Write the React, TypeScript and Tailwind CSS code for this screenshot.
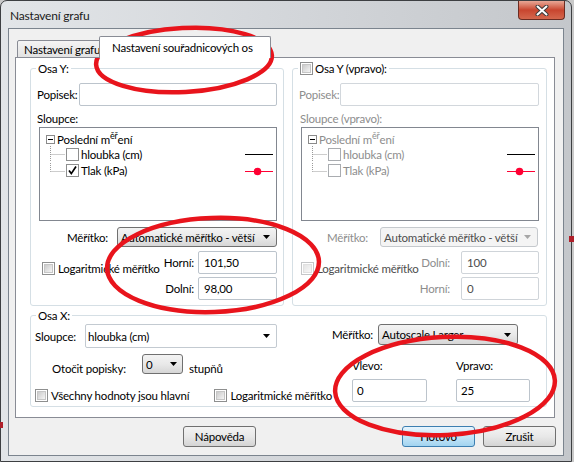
import React from "react";

function Arrow({ c = "#000" }: { c?: string }) {
  return (
    <svg width="7" height="4" viewBox="0 0 7 4" className="shrink-0">
      <path d="M0 0H7L3.5 4Z" fill={c} />
    </svg>
  );
}

function Check({ disabled }: { disabled?: boolean }) {
  return (
    <div
      className={
        disabled
          ? "w-[13px] h-[13px] shrink-0 border border-[#c4c6c8] bg-white p-[1px]"
          : "w-[13px] h-[13px] shrink-0 border border-[#8e8f8f] bg-white p-[1px]"
      }
    >
      <div
        className={
          disabled
            ? "w-full h-full border border-[#e0e0e0] bg-linear-to-br from-[#e4e4e4] to-[#f8f8f8]"
            : "w-full h-full border border-[#c6c6c6] bg-linear-to-br from-[#cbcbcb] to-[#f5f5f5]"
        }
      />
    </div>
  );
}

function TreeCheck({ checked, disabled }: { checked?: boolean; disabled?: boolean }) {
  return (
    <div
      className={
        disabled
          ? "w-[13px] h-[13px] shrink-0 border border-[#a9acb0] bg-white"
          : "w-[13px] h-[13px] shrink-0 border border-[#8e8f8f] bg-white"
      }
    >
      {checked && (
        <svg width="11" height="11" viewBox="0 0 11 11">
          <path d="M2 5.5L4.3 8.6L9 1.5" fill="none" stroke="#000" strokeWidth="1.7" />
        </svg>
      )}
    </div>
  );
}

function Connector({ last }: { last?: boolean }) {
  return (
    <svg width="20" height="16" viewBox="0 0 20 16" className="shrink-0">
      <path
        d={last ? "M4.5 0V8.5M4.5 8.5H19" : "M4.5 0V16M4.5 8.5H19"}
        fill="none"
        stroke="#9a9a9a"
        strokeWidth="1"
        strokeDasharray="1 1"
      />
    </svg>
  );
}

function Tree({ disabled }: { disabled?: boolean }) {
  const txt = disabled ? "text-[#8d8d8d]" : "text-black";
  return (
    <div className="w-[238px] h-[94px] border border-[#828790] bg-white pt-[4px] pl-[6px] pr-[3px]">
      <div className="flex items-center h-[14px]">
        <div className="w-[9px] h-[9px] shrink-0 border border-[#8a8a8a] bg-white flex items-center justify-center">
          <div className="w-[5px] h-[1px] bg-black" />
        </div>
        <span className={`ml-[2px] ${txt}`}>
          Poslední m<span className="text-[9px] leading-none align-super">ěř</span>ení
        </span>
      </div>
      <div className="flex items-center h-[16px]">
        <Connector />
        <TreeCheck disabled={disabled} />
        <span className={`ml-[2px] ${txt}`}>hloubka (cm)</span>
        <svg width="28" height="16" viewBox="0 0 28 16" className="ml-auto shrink-0">
          <path d="M0 8.5H28" stroke="#000" strokeWidth="1" />
        </svg>
      </div>
      <div className="flex items-center h-[17px]">
        <Connector last />
        <TreeCheck checked={!disabled} disabled={disabled} />
        <span className={`ml-[2px] ${txt}`}>Tlak (kPa)</span>
        <svg width="28" height="16" viewBox="0 0 28 16" className="ml-auto shrink-0">
          <path d="M0 8.5H28" stroke="#ff0033" strokeWidth="1" />
          <circle cx="12.5" cy="8.5" r="3.8" fill="#ff0033" />
        </svg>
      </div>
    </div>
  );
}

function Group({
  legend,
  className,
  children,
}: {
  legend: React.ReactNode;
  className: string;
  children: React.ReactNode;
}) {
  return (
    <div className={`relative border border-[#d5dfe5] rounded-[3px] ${className}`}>
      <div className="absolute -top-[8px] left-[5px] px-[2px] bg-white h-[15px] flex items-center">
        {legend}
      </div>
      {children}
    </div>
  );
}

export default function App() {
  return (
    <div className="w-[574px] h-[462px] relative overflow-hidden bg-[#c9c9c9] text-[11.5px] tracking-[-0.2px] leading-[15px] text-black font-[family-name:Lato,'Noto_Sans',sans-serif]">
      {/* window */}
      <div className="w-[572px] h-[462px] border border-[#3d3f42] rounded-t-[7px] bg-linear-to-r from-[#e2e5e8] via-[#d3d6da] to-[#c4c7cb] flex flex-col">
        {/* title bar */}
        <div className="h-[27px] flex shrink-0">
          <div className="pl-[9px] pt-[7px] text-[12px] text-[#1b1b1b]">Nastavení grafu</div>
          <div className="ml-auto mr-[6px] w-[47px] h-[19px] rounded-b-[4px] border border-t-0 border-[#6b2c22] bg-linear-to-b from-[#e7a796] via-[#c8452f] to-[#d4674d] flex items-center justify-center">
            <svg width="14" height="11" viewBox="0 0 14 11">
              <path d="M2.5 1.5L11.5 9.5M11.5 1.5L2.5 9.5" stroke="#3b3b3b" strokeWidth="4" strokeLinecap="round" />
              <path d="M2.5 1.5L11.5 9.5M11.5 1.5L2.5 9.5" stroke="#ffffff" strokeWidth="2" strokeLinecap="round" />
            </svg>
          </div>
        </div>

        {/* client area */}
        <div className="mx-[7px] h-[428px] border border-[#7b848e] bg-[#f0f0f0] flex flex-col pt-[7px] pl-[6px]">
          {/* tabs */}
          <div className="flex items-end h-[22px] pl-[2px] relative z-10">
            <div className="w-[84px] h-[18px] border border-[#898c95] rounded-t-[2px] bg-linear-to-b from-[#f4f4f4] to-[#e2e2e2] pl-[6px] pt-[1px] whitespace-nowrap overflow-hidden">
              Nastavení grafu
            </div>
            <div className="w-[172px] h-[22px] -ml-[2px] border border-b-0 border-[#898c95] rounded-t-[2px] bg-white pl-[12px] pt-[3px] whitespace-nowrap">
              Nastavení souřadnicových os
            </div>
          </div>

          {/* tab panel */}
          <div className="-mt-px w-[540px] h-[361px] border border-[#898c95] bg-white pl-[14px] pt-[10px] flex flex-col">
            <div className="flex gap-[8px]">
              {/* Osa Y */}
              <Group legend={<span>Osa Y:</span>} className="w-[254px] h-[238px] flex flex-col">
                <div className="flex items-center mt-[14px] pl-[6px]">
                  <span className="w-[42px] whitespace-nowrap">Popisek:</span>
                  <div className="w-[198px] h-[23px] border border-[#bcc4cc] rounded-[2px] bg-white" />
                </div>
                <div className="mt-[5px] pl-[6px] h-[15px]">Sloupce:</div>
                <div className="mt-[1px] ml-[8px]">
                  <Tree />
                </div>
                <div className="flex items-center mt-[6px] ml-[36px]">
                  <span className="w-[50px]">Měřítko:</span>
                  <div className="w-[160px] h-[20px] border border-[#707070] rounded-[3px] bg-linear-to-b from-[#f3f3f3] via-[#e9e9e9] to-[#d6d6d6] flex items-center pl-[3px] pr-[6px]">
                    <span className="whitespace-nowrap">Automatické měřítko - větší</span>
                    <span className="ml-auto">
                      <Arrow />
                    </span>
                  </div>
                </div>
                <div className="flex mt-[4px]">
                  <div className="flex items-center ml-[11px] mt-[11px] h-[13px]">
                    <Check />
                    <span className="ml-[3px] whitespace-nowrap">Logaritmické měřítko</span>
                  </div>
                  <div className="ml-auto mr-[6px] grid grid-cols-[auto_79px] gap-x-[4px] gap-y-[3px] items-center">
                    <span className="text-right">Horní:</span>
                    <div className="h-[23px] border border-[#bcc4cc] rounded-[2px] bg-white pl-[5px] flex items-center">101,50</div>
                    <span className="text-right">Dolní:</span>
                    <div className="h-[23px] border border-[#bcc4cc] rounded-[2px] bg-white pl-[5px] flex items-center">98,00</div>
                  </div>
                </div>
              </Group>

              {/* Osa Y (vpravo) */}
              <Group
                legend={
                  <div className="flex items-center">
                    <Check />
                    <span className="ml-[2px]">Osa Y (vpravo):</span>
                  </div>
                }
                className="w-[255px] h-[238px] flex flex-col"
              >
                <div className="flex items-center mt-[14px] pl-[6px]">
                  <span className="w-[41px] whitespace-nowrap text-[#8d8d8d]">Popisek:</span>
                  <div className="w-[199px] h-[23px] border border-[#d2d7dc] rounded-[2px] bg-white" />
                </div>
                <div className="mt-[5px] pl-[7px] h-[15px] text-[#8d8d8d]">Sloupce (vpravo):</div>
                <div className="mt-[1px] ml-[8px]">
                  <Tree disabled />
                </div>
                <div className="flex items-center mt-[6px] ml-[34px]">
                  <span className="w-[53px] text-[#8d8d8d]">Měřítko:</span>
                  <div className="w-[158px] h-[20px] border border-[#c5c9cd] rounded-[3px] bg-[#f4f4f4] flex items-center pl-[3px] pr-[6px] text-[#4d4d4d]">
                    <span className="whitespace-nowrap">Automatické měřítko - větší</span>
                    <span className="ml-auto">
                      <Arrow c="#a6a6a6" />
                    </span>
                  </div>
                </div>
                <div className="flex mt-[4px]">
                  <div className="flex items-center ml-[8px] mt-[11px] h-[13px]">
                    <Check disabled />
                    <span className="ml-[3px] whitespace-nowrap text-[#4d4d4d]">Logaritmické měřítko</span>
                  </div>
                  <div className="ml-auto mr-[7px] grid grid-cols-[auto_78px] gap-x-[11px] gap-y-[3px] items-center">
                    <span className="text-right text-[#8d8d8d]">Dolní:</span>
                    <div className="h-[23px] border border-[#cfd4d9] rounded-[2px] bg-white pl-[5px] flex items-center text-[#4d4d4d]">100</div>
                    <span className="text-right text-[#8d8d8d]">Horní:</span>
                    <div className="h-[23px] border border-[#cfd4d9] rounded-[2px] bg-white pl-[5px] flex items-center text-[#4d4d4d]">0</div>
                  </div>
                </div>
              </Group>
            </div>

            {/* Osa X */}
            <Group legend={<span>Osa X:</span>} className="mt-[9px] w-[517px] h-[92px] flex">
              <div className="w-[301px] flex flex-col">
                <div className="mt-[8px] flex items-center pl-[4px]">
                  <span className="w-[50px]">Sloupce:</span>
                  <div className="w-[192px] h-[24px] border border-[#c3cad1] rounded-[2px] bg-white flex items-center pl-[2px] pr-[6px]">
                    <span>hloubka (cm)</span>
                    <span className="ml-auto">
                      <Arrow />
                    </span>
                  </div>
                </div>
                <div className="mt-[6px] flex items-start pl-[21px]">
                  <span className="w-[90px] mt-[7px]">Otočit popisky:</span>
                  <div className="w-[41px] h-[20px] border border-[#707070] rounded-[3px] bg-linear-to-b from-[#f3f3f3] via-[#e9e9e9] to-[#d6d6d6] flex items-center pl-[3px] pr-[5px]">
                    <span>0</span>
                    <span className="ml-auto">
                      <Arrow />
                    </span>
                  </div>
                  <span className="ml-[6px] mt-[7px]">stupňů</span>
                </div>
                <div className="mt-[13px] flex items-center pl-[4px] h-[13px]">
                  <div className="w-[182px] flex items-center">
                    <Check />
                    <span className="ml-[3px] whitespace-nowrap">Všechny hodnoty jsou hlavní</span>
                  </div>
                  <Check />
                  <span className="ml-[3px] whitespace-nowrap">Logaritmické měřítko</span>
                </div>
              </div>
              <div className="flex flex-col">
                <div className="mt-[8px] flex items-center">
                  <span className="w-[46px]">Měřítko:</span>
                  <div className="w-[140px] h-[21px] border border-[#707070] rounded-[3px] bg-linear-to-b from-[#f3f3f3] via-[#e9e9e9] to-[#d6d6d6] flex items-center pl-[3px] pr-[6px]">
                    <span className="whitespace-nowrap">Autoscale Larger</span>
                    <span className="ml-auto">
                      <Arrow />
                    </span>
                  </div>
                </div>
                <div className="mt-[13px] ml-[20px] flex gap-[29px]">
                  <div className="flex flex-col">
                    <span className="h-[15px]">Vlevo:</span>
                    <div className="mt-[6px] w-[75px] h-[23px] border border-[#bcc4cc] rounded-[2px] bg-white pl-[4px] flex items-center">0</div>
                  </div>
                  <div className="flex flex-col">
                    <span className="h-[15px]">Vpravo:</span>
                    <div className="mt-[6px] w-[74px] h-[23px] border border-[#bcc4cc] rounded-[2px] bg-white pl-[4px] flex items-center">25</div>
                  </div>
                </div>
              </div>
            </Group>
          </div>

          {/* dialog buttons */}
          <div className="mt-[8px] flex">
            <div className="ml-[168px] w-[73px] h-[21px] border border-[#707070] rounded-[3px] bg-linear-to-b from-[#f3f3f3] via-[#e8e8e8] to-[#d4d4d4] flex items-center justify-center">
              Nápověda
            </div>
            <div className="ml-[146px] w-[73px] h-[21px] border border-[#3c7fb1] rounded-[3px] bg-linear-to-b from-[#e8f5fd] via-[#c6e6f8] to-[#a2d4f0] flex items-center justify-center">
              Hotovo
            </div>
            <div className="ml-[8px] w-[73px] h-[21px] border border-[#707070] rounded-[3px] bg-linear-to-b from-[#f3f3f3] via-[#e8e8e8] to-[#d4d4d4] flex items-center justify-center">
              Zrušit
            </div>
          </div>
        </div>
      </div>

      {/* red annotation ellipses */}
      <svg
        width="574"
        height="462"
        viewBox="0 0 574 462"
        className="absolute inset-0 pointer-events-none"
      >
        <g fill="none" stroke="#e8141c" strokeWidth="4.5">
          <ellipse cx="184" cy="60" rx="88" ry="32" transform="rotate(-3 184 60)" />
          <ellipse cx="213" cy="265" rx="106" ry="47" transform="rotate(-2 213 265)" />
          <ellipse cx="445" cy="386" rx="110" ry="49" transform="rotate(-3 445 386)" />
        </g>
        <rect x="0" y="422" width="3" height="6" fill="#b0202a" />
        <rect x="569" y="236" width="5" height="6" fill="#b0202a" />
      </svg>
    </div>
  );
}
